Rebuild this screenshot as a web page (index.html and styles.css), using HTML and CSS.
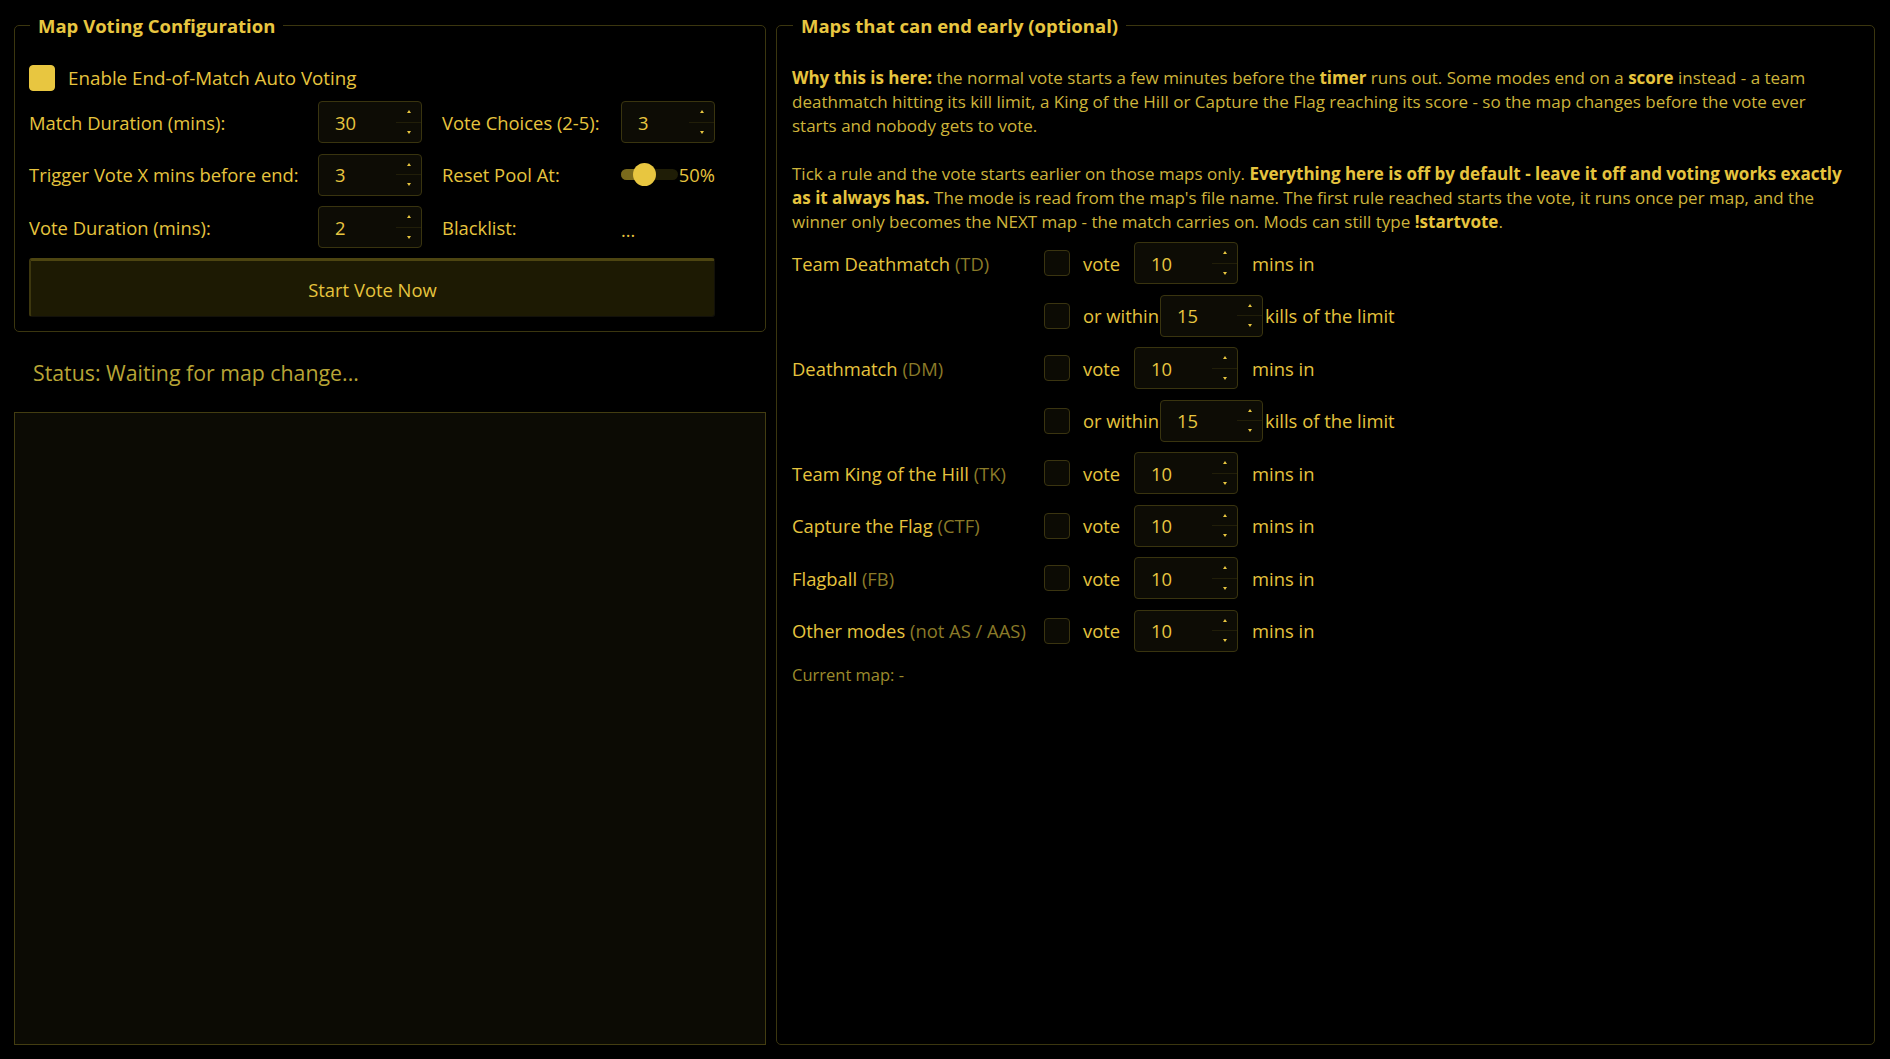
FILE: index.html
```html
<!DOCTYPE html>
<html lang="en">
<head>
    <meta charset="UTF-8">
    <title>Map Voting</title>
    <link rel="stylesheet" href="styles.css">
</head>
<body>

<div class="app">
    <div class="left">
        <fieldset class="group config">
            <legend>Map Voting Configuration</legend>

            <label class="check-row">
                <span class="check on"></span>
                <span>Enable End-of-Match Auto Voting</span>
            </label>

            <div class="settings">
                <span class="lbl">Match Duration (mins):</span>
                <div class="num"><span class="val">30</span><span class="spin"><i class="up"></i><i class="down"></i></span></div>
                <span class="lbl">Vote Choices (2-5):</span>
                <div class="num narrow"><span class="val">3</span><span class="spin"><i class="up"></i><i class="down"></i></span></div>

                <span class="lbl">Trigger Vote X mins before end:</span>
                <div class="num"><span class="val">3</span><span class="spin"><i class="up"></i><i class="down"></i></span></div>
                <span class="lbl">Reset Pool At:</span>
                <div class="slider">
                    <div class="track"><span class="fill"></span><span class="thumb"></span></div>
                    <span class="pct">50%</span>
                </div>

                <span class="lbl">Vote Duration (mins):</span>
                <div class="num"><span class="val">2</span><span class="spin"><i class="up"></i><i class="down"></i></span></div>
                <span class="lbl">Blacklist:</span>
                <span class="dots">...</span>
            </div>

            <button class="start">Start Vote Now</button>
        </fieldset>

        <div class="status">Status: Waiting for map change...</div>
        <div class="log"></div>
    </div>

    <fieldset class="group early">
        <legend>Maps that can end early (optional)</legend>

        <p class="info"><b>Why this is here:</b> the normal vote starts a few minutes before the <b>timer</b> runs out. Some modes end on a <b>score</b> instead - a team<br>deathmatch hitting its kill limit, a King of the Hill or Capture the Flag reaching its score - so the map changes before the vote ever<br>starts and nobody gets to vote.</p>

        <p class="info">Tick a rule and the vote starts earlier on those maps only. <b>Everything here is off by default - leave it off and voting works exactly<br>as it always has.</b> The mode is read from the map's file name. The first rule reached starts the vote, it runs once per map, and the<br>winner only becomes the NEXT map - the match carries on. Mods can still type <b>!startvote</b>.</p>

        <div class="rules">
            <!-- Team Deathmatch -->
            <div class="rule">
                <span class="mode">Team Deathmatch <em>(TD)</em></span>
                <span class="check"></span>
                <span class="word">vote</span>
                <div class="num"><span class="val">10</span><span class="spin"><i class="up"></i><i class="down"></i></span></div>
                <span class="after">mins in</span>
            </div>
            <div class="rule">
                <span class="mode"></span>
                <span class="check"></span>
                <span class="word within">or within</span>
                <div class="num kills"><span class="val">15</span><span class="spin"><i class="up"></i><i class="down"></i></span></div>
                <span class="after tight">kills of the limit</span>
            </div>

            <!-- Deathmatch -->
            <div class="rule">
                <span class="mode">Deathmatch <em>(DM)</em></span>
                <span class="check"></span>
                <span class="word">vote</span>
                <div class="num"><span class="val">10</span><span class="spin"><i class="up"></i><i class="down"></i></span></div>
                <span class="after">mins in</span>
            </div>
            <div class="rule">
                <span class="mode"></span>
                <span class="check"></span>
                <span class="word within">or within</span>
                <div class="num kills"><span class="val">15</span><span class="spin"><i class="up"></i><i class="down"></i></span></div>
                <span class="after tight">kills of the limit</span>
            </div>

            <div class="rule">
                <span class="mode">Team King of the Hill <em>(TK)</em></span>
                <span class="check"></span>
                <span class="word">vote</span>
                <div class="num"><span class="val">10</span><span class="spin"><i class="up"></i><i class="down"></i></span></div>
                <span class="after">mins in</span>
            </div>

            <div class="rule">
                <span class="mode">Capture the Flag <em>(CTF)</em></span>
                <span class="check"></span>
                <span class="word">vote</span>
                <div class="num"><span class="val">10</span><span class="spin"><i class="up"></i><i class="down"></i></span></div>
                <span class="after">mins in</span>
            </div>

            <div class="rule">
                <span class="mode">Flagball <em>(FB)</em></span>
                <span class="check"></span>
                <span class="word">vote</span>
                <div class="num"><span class="val">10</span><span class="spin"><i class="up"></i><i class="down"></i></span></div>
                <span class="after">mins in</span>
            </div>

            <div class="rule">
                <span class="mode">Other modes <em>(not AS / AAS)</em></span>
                <span class="check"></span>
                <span class="word">vote</span>
                <div class="num"><span class="val">10</span><span class="spin"><i class="up"></i><i class="down"></i></span></div>
                <span class="after">mins in</span>
            </div>
        </div>

        <div class="current">Current map: -</div>
    </fieldset>
</div>

</body>
</html>
```

FILE: styles.css
```css
* {
    box-sizing: border-box;
}
html, body {
    margin: 0;
    height: 100%;
}
body {
    background-color: #000;
    color: #e6c43e;
    font-family: "Open Sans", "Noto Sans", sans-serif;
    font-size: 18px;
}
.app {
    display: grid;
    grid-template-columns: 752px 1099px;
    column-gap: 10px;
    height: 1059px;
    padding: 12px 15px 14px 14px;
}
.left {
    display: flex;
    flex-direction: column;
    min-height: 0;
}

/* group boxes */
.group {
    margin: 0;
    border: 1px solid #3b360f;
    border-radius: 5px;
    min-width: 0;
}
.group legend {
    margin-left: 1px;
    padding: 2px 8px 0 8px;
    font-weight: bold;
    font-size: 18.5px;
    line-height: 24px;
    color: #e8c640;
}
.config {
    padding: 27px 14px 14px 14px;
}
.early {
    padding: 28px 15px 0 15px;
}

/* checkboxes */
.check {
    display: inline-block;
    flex: none;
    width: 26px;
    height: 26px;
    border: 1px solid #3a3410;
    border-radius: 4px;
    background-color: #0c0b04;
}
.check.on {
    background-color: #e8c640;
    border-color: #e8c640;
}
.check-row {
    display: flex;
    align-items: center;
    gap: 13px;
    height: 26px;
    font-size: 18.8px;
}

/* settings grid */
.settings {
    display: grid;
    grid-template-columns: 289px 124px 179px 94px;
    grid-auto-rows: 42px;
    row-gap: 10.5px;
    align-items: center;
    margin-top: 10px;
}
.lbl {
    font-size: 18.4px;
}

/* number boxes with spinner */
.num {
    display: flex;
    width: 104px;
    height: 42px;
    border: 1px solid #39340f;
    border-radius: 4px;
    background-color: #0d0c05;
}
.num.narrow {
    width: 94px;
}
.num.kills {
    width: 103px;
}
.num .val {
    flex: 1;
    align-self: center;
    padding-left: 16px;
    font-size: 18.4px;
    color: #e8c640;
}
.spin {
    display: flex;
    flex-direction: column;
    width: 25px;
}
.spin i {
    flex: 1;
    display: flex;
    align-items: center;
    justify-content: center;
}
.spin i + i {
    border-top: 1px solid #211e09;
}
.spin i::before {
    content: "";
    border-left: 2.5px solid transparent;
    border-right: 2.5px solid transparent;
}
.spin .up::before {
    border-bottom: 3px solid #e8c640;
}
.spin .down::before {
    border-top: 3px solid #e8c640;
}

/* slider */
.slider {
    display: flex;
    align-items: center;
}
.track {
    position: relative;
    width: 57px;
    height: 11px;
    border-radius: 6px;
    background-color: #1f1d06;
}
.fill {
    position: absolute;
    left: 0;
    top: 0;
    width: 18px;
    height: 11px;
    border-radius: 6px 0 0 6px;
    background-color: #7a6a1c;
}
.thumb {
    position: absolute;
    left: 12px;
    top: -6px;
    width: 23px;
    height: 23px;
    border-radius: 50%;
    background-color: #e8c640;
}
.pct {
    margin-left: 1px;
    font-size: 18.4px;
}
.dots {
    align-self: center;
    font-size: 18px;
    padding-top: 6px;
}

/* start button */
.start {
    display: block;
    width: 686px;
    height: 59px;
    margin-top: 10px;
    padding-top: 2px;
    border: 1px solid #13110a;
    border-top: 3px solid #4d4511;
    border-left: 2px solid #3d370e;
    border-radius: 3px;
    background-color: #1d1a03;
    color: #e6c43e;
    font-family: inherit;
    font-size: 18.4px;
    cursor: pointer;
}

/* status + log */
.status {
    margin: 26px 0 24px 0;
    padding-left: 19px;
    line-height: 30px;
    font-size: 21.3px;
    color: #b8a536;
}
.log {
    flex: 1;
    border: 1px solid #433d11;
    background-color: #0c0b04;
}

/* early end panel */
.info {
    margin: 0 0 23.5px 0;
    font-size: 17px;
    line-height: 24px;
    color: #cdb43b;
    white-space: nowrap;
}
.info b {
    color: #e6c43e;
}
.rules {
    display: flex;
    flex-direction: column;
    gap: 10.5px;
    margin-top: -15px;
}
.rule {
    display: flex;
    align-items: center;
    height: 42px;
    font-size: 18.4px;
}
.mode {
    width: 252px;
    flex: none;
}
.mode em {
    font-style: normal;
    color: #8a7a28;
}
.word {
    width: 64px;
    flex: none;
    padding-left: 13px;
}
.word.within {
    width: 90px;
}
.after {
    margin-left: 14px;
}
.after.tight {
    margin-left: 2px;
}
.current {
    margin-top: 12px;
    font-size: 16.5px;
    line-height: 22px;
    color: #9c8b2c;
}
```
